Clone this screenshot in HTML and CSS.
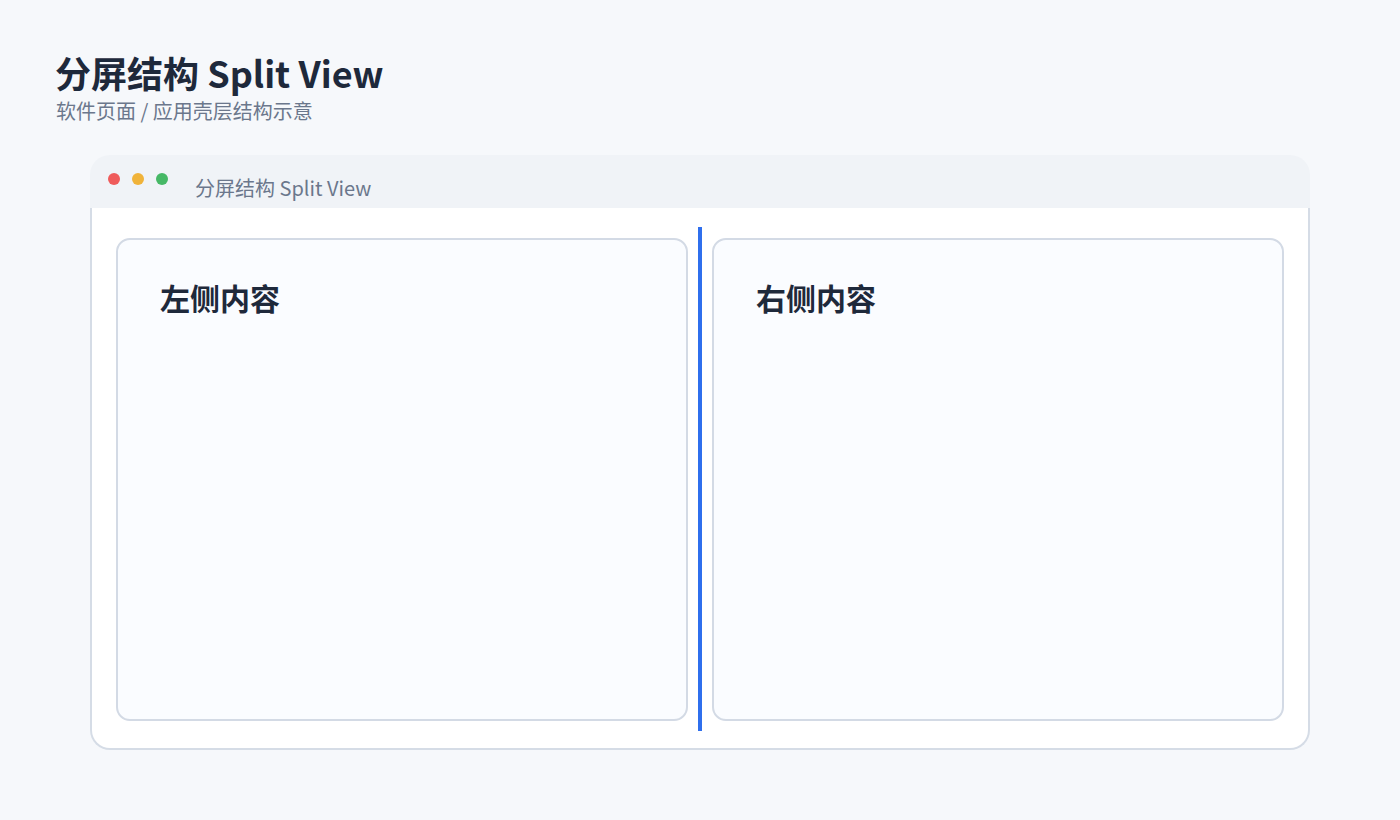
FILE: index.html
```html
<!DOCTYPE html>
<html lang="zh-CN">
<head>
  <meta charset="UTF-8">
  <title>分屏结构 Split View</title>
  <link rel="stylesheet" href="styles.css">
</head>
<body>
  <header class="page-head">
    <h1>分屏结构 Split View</h1>
    <p>软件页面 / 应用壳层结构示意</p>
  </header>

  <div class="window">
    <div class="titlebar">
      <div class="dots">
        <span class="dot red"></span>
        <span class="dot yellow"></span>
        <span class="dot green"></span>
      </div>
      <span class="title">分屏结构 Split View</span>
    </div>
    <div class="window-body">
      <div class="split">
        <section class="pane">
          <h2>左侧内容</h2>
        </section>
        <div class="divider"></div>
        <section class="pane">
          <h2>右侧内容</h2>
        </section>
      </div>
    </div>
  </div>
</body>
</html>
```

FILE: styles.css
```css
body {
  margin: 0;
  padding: 46px 90px 0 55px;
  background-color: #f6f8fb;
  font-family: 'Noto Sans CJK SC', 'Noto Sans', sans-serif;
  color: #1e293b;
}
.page-head {
  height: 79px;
}
.page-head h1 {
  margin: 0;
  font-size: 36px;
  font-weight: 700;
  line-height: 52px;
}
.page-head p {
  margin: 0 0 0 1px;
  font-size: 20px;
  line-height: 26px;
  color: #6b778c;
}
/* window shell */
.window {
  margin: 30px 0 0 35px;
  width: 1220px;
}
.titlebar {
  height: 53px;
  background: #f0f3f7;
  border-radius: 20px 20px 0 0;
  display: flex;
  align-items: center;
  padding: 0 18px;
  gap: 27px;
  box-sizing: border-box;
}
.dots {
  display: flex;
  gap: 12px;
  margin-top: -5px;
}
.dot {
  width: 12px;
  height: 12px;
  border-radius: 50%;
}
.dot.red { background: #ef5b5b; }
.dot.yellow { background: #f0b33a; }
.dot.green { background: #46b866; }
.title {
  font-size: 20px;
  color: #6b778c;
  margin-top: 12px;
}
.window-body {
  background: #fff;
  border: 2px solid #d5dce6;
  border-top: none;
  border-radius: 0 0 20px 20px;
  padding: 19px 24px 17px;
}
.split {
  display: flex;
  gap: 10px;
  height: 504px;
}
.pane {
  flex: 1;
  margin: 11px 0 10px;
  background: #fafcff;
  border: 2px solid #d3dae5;
  border-radius: 14px;
  padding: 35px 42px;
}
.pane h2 {
  margin: 0;
  font-size: 30px;
  font-weight: 700;
  line-height: 44px;
}
.divider {
  width: 4px;
  background: #2f6fed;
}
```
